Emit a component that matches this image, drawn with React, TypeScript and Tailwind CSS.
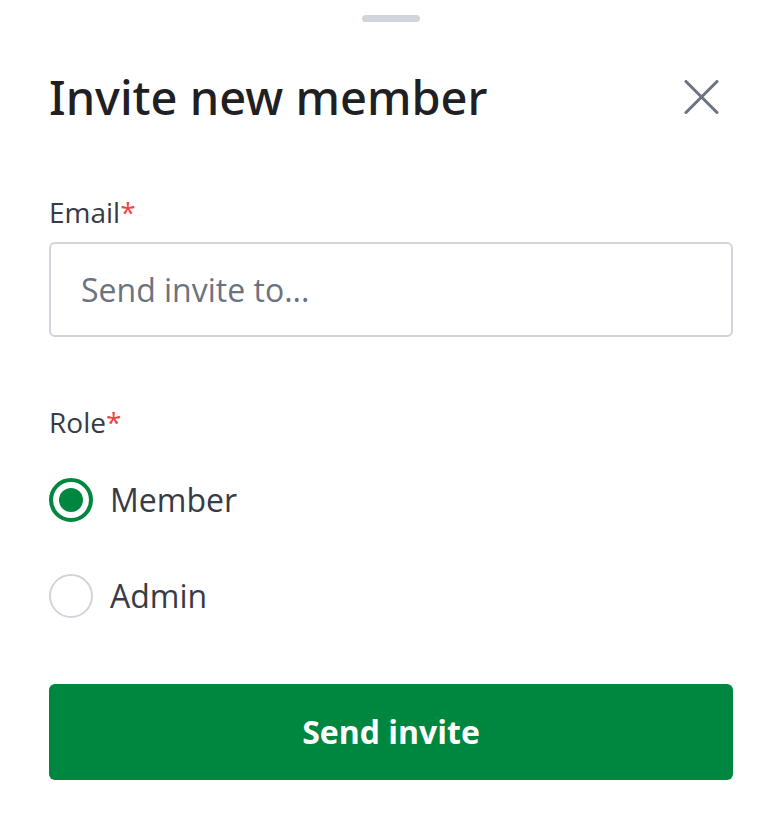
import React from "react";

const ROLES = ["Member", "Admin"];

function CloseIcon() {
  return (
    <svg width="36" height="34" viewBox="0 0 36 34" fill="none" stroke="#6b7280" strokeWidth="3" strokeLinecap="round">
      <path d="M3 1.5 L34 32.5 M34 1.5 L3 32.5" />
    </svg>
  );
}

function Radio({ checked, label, onClick }: { checked: boolean; label: string; onClick: () => void }) {
  return (
    <button type="button" onClick={onClick} className="flex h-[48px] items-center gap-[17px] text-left">
      <span
        className={`flex h-[44px] w-[44px] items-center justify-center rounded-full ${
          checked ? "border-[4px] border-[#00873f]" : "border-2 border-[#d1d5db]"
        }`}
      >
        {checked && <span className="h-[24px] w-[24px] rounded-full bg-[#00873f]" />}
      </span>
      <span className="text-[32px] text-[#373b45]">{label}</span>
    </button>
  );
}

export default function App() {
  const [role, setRole] = React.useState("Member");

  return (
    <div className="min-h-[828px] w-[780px] bg-white pl-[49px] pr-[47px] font-['Open_Sans',sans-serif]">
      <div className="flex justify-center pt-[15px]">
        <div className="h-[7px] w-[58px] rounded-full bg-[#d1d5db]" />
      </div>

      <div className="mt-[47px] flex items-center justify-between">
        <h1 className="font-['Noto_Sans',sans-serif] text-[47px] font-medium leading-[56px] text-[#1f2023]">
          Invite new member
        </h1>
        <div className="mr-[14px]">
          <CloseIcon />
        </div>
      </div>

      <label className="mt-[68px] block text-[28px] leading-[38px] text-[#373b45]">
        Email<span className="text-[#ef4444]">*</span>
      </label>
      <input
        placeholder="Send invite to..."
        className="mt-[11px] h-[95px] w-full rounded-[6px] border-2 border-[#d1d5db] px-[30px] text-[32px] text-[#373b45] outline-none placeholder:text-[#6b7280]"
      />

      <label className="mt-[66px] block text-[28px] leading-[38px] text-[#373b45]">
        Role<span className="text-[#ef4444]">*</span>
      </label>
      <div className="mt-[35px] flex flex-col gap-[48px]">
        {ROLES.map((r) => (
          <Radio key={r} label={r} checked={role === r} onClick={() => setRole(r)} />
        ))}
      </div>

      <button
        type="button"
        className="mt-[64px] flex h-[96px] w-full items-center justify-center rounded-[6px] bg-[#00873f] text-[32px] font-bold text-white"
      >
        Send invite
      </button>
    </div>
  );
}
